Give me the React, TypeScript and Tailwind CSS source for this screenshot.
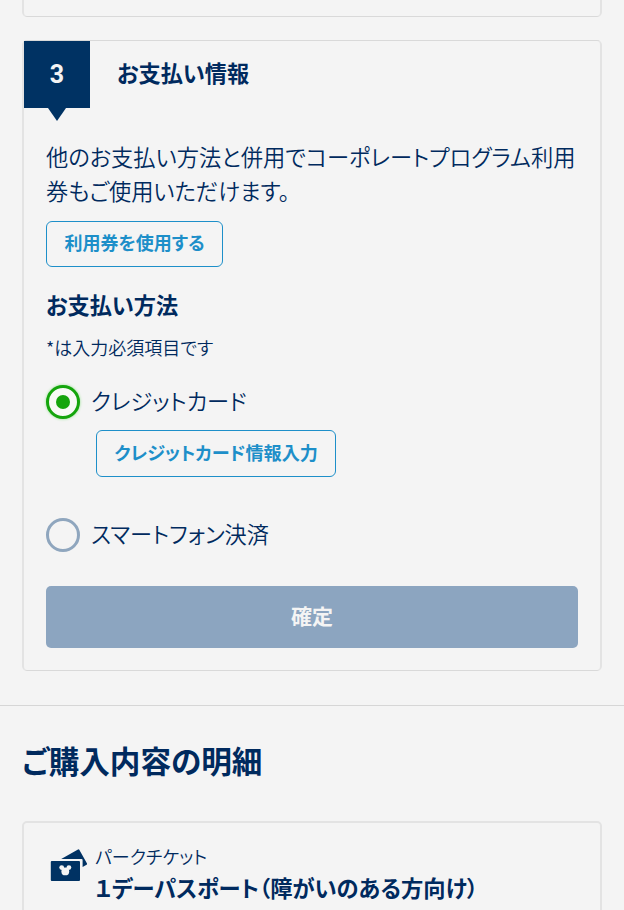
import React, { useState } from "react"

function TicketIcon() {
    return (
        <svg width="38" height="34" viewBox="0 0 38 34" className="shrink-0">
            <path d="M11.2 9.9 28 0.4Q28.8 0 29.3 0.8L37 14.6Q37.3 15.4 36.6 15.8L32.6 18V11Q32.6 9.9 31.5 9.9Z" fill="#003263" />
            <path d="M1.8 12H29a1 1 0 0 1 1 1V31a1 1 0 0 1-1 1H1.8a1 1 0 0 1-1-1V13a1 1 0 0 1 1-1Z" fill="#003263" />
            <circle cx="15.3" cy="22.4" r="3.9" fill="#f4f4f4" />
            <circle cx="11.7" cy="18.6" r="2.4" fill="#f4f4f4" />
            <circle cx="18.9" cy="18.6" r="2.4" fill="#f4f4f4" />
        </svg>
    )
}

function Radio({ checked, label, onClick }: { checked: boolean; label: string; onClick: () => void }) {
    return (
        <button role="radio" aria-checked={checked} onClick={onClick} className="flex h-[34px] items-center">
            {checked ? (
                <span className="flex size-[34px] items-center justify-center rounded-full border-3 border-[#14a50c] bg-[#f7faf6] shadow-[0_0_3px_#8fe08a]">
                    <span className="size-3.5 rounded-full bg-[#14a50c]" />
                </span>
            ) : (
                <span className="size-[34px] rounded-full border-3 border-[#8fa6be]" />
            )}
            <span className="ml-[11px] whitespace-nowrap pb-1 text-[22.2px] leading-[34px]">{label}</span>
        </button>
    )
}

export default function App() {
    const [method, setMethod] = useState("card")
    return (
        <div className="h-[910px] w-[624px] overflow-hidden bg-[#f4f4f4] font-['Noto_Sans_CJK_JP',sans-serif] font-[350] text-[#002a5e] [font-feature-settings:'palt']">
            <div className="mx-[22px] h-[17px] rounded-b-[5px] border-x-2 border-b border-x-[#e3e3e3] border-b-[#d9d9d9]" />

            <section className="mx-[22px] mt-[23px] h-[631px] rounded-[5px] border-x-2 border-y border-x-[#e3e3e3] border-y-[#d9d9d9]">
                <header className="flex h-[67px] items-center">
                    <div className="relative flex h-[67px] w-[66px] items-center justify-center bg-[#003263] font-['Roboto',sans-serif] text-[25px] font-bold text-[#f4f4f4]">
                        3
                        <svg width="18" height="13" viewBox="0 0 18 13" className="absolute left-6 top-full">
                            <path d="M0 0H18L9 13Z" fill="#003263" />
                        </svg>
                    </div>
                    <h2 className="ml-[27px] pb-[5px] text-[22.2px] font-bold leading-[34px]">お支払い情報</h2>
                </header>

                <div className="px-[22px] pt-[31px]">
                    <p className="whitespace-nowrap text-[22.27px] leading-[34px]">
                        他のお支払い方法と併用でコーポレートプログラム利用
                        <br />
                        券もご使用いただけます。
                    </p>
                    <button className="mt-3.5 flex h-[46px] w-[177px] items-center justify-center whitespace-nowrap rounded-md border-[1.5px] border-[#1d8fc9] pb-[3px] text-[18px] font-bold text-[#1d8fc9]">
                        利用券を使用する
                    </button>
                    <h3 className="mt-5 text-[22.2px] font-bold leading-[34px]">お支払い方法</h3>
                    <p className="mt-[13px] text-[18px] leading-[26px]">*は入力必須項目です</p>
                    <div role="radiogroup" className="mt-[25px]">
                        <Radio checked={method === "card"} label="クレジットカード" onClick={() => setMethod("card")} />
                        <button className="ml-[50px] mt-[11px] flex h-[47px] w-[240px] items-center justify-center whitespace-nowrap rounded-md border-[1.5px] border-[#1d8fc9] pb-[2px] text-[18.1px] font-bold text-[#1d8fc9]">
                            クレジットカード情報入力
                        </button>
                        <div className="mt-[41px]">
                            <Radio checked={method === "phone"} label="スマートフォン決済" onClick={() => setMethod("phone")} />
                        </div>
                    </div>
                    <button className="mt-[34px] flex h-[62px] w-[532px] items-center justify-center rounded-[5px] bg-[#8ca5c0] pb-[3px] text-[21px] font-bold text-[#f4f4f4]">
                        確定
                    </button>
                </div>
            </section>

            <hr className="mt-[34px] border-[#d6d6d6]" />
            <h1 className="ml-[22px] mt-[31px] text-[30.6px] font-bold leading-[46px]">ご購入内容の明細</h1>

            <section className="mx-[22px] mt-[38px] flex h-[120px] rounded-[5px] border-2 border-[#e3e3e3] pl-[26px] pt-[20px]">
                <div className="mt-[6px]">
                    <TicketIcon />
                </div>
                <div className="ml-[7px] whitespace-nowrap">
                    <p className="text-[18px] leading-[26px]">パークチケット</p>
                    <p className="mt-px text-[22.25px] font-bold leading-[34px]">１デーパスポート（障がいのある方向け）</p>
                </div>
            </section>
        </div>
    )
}
